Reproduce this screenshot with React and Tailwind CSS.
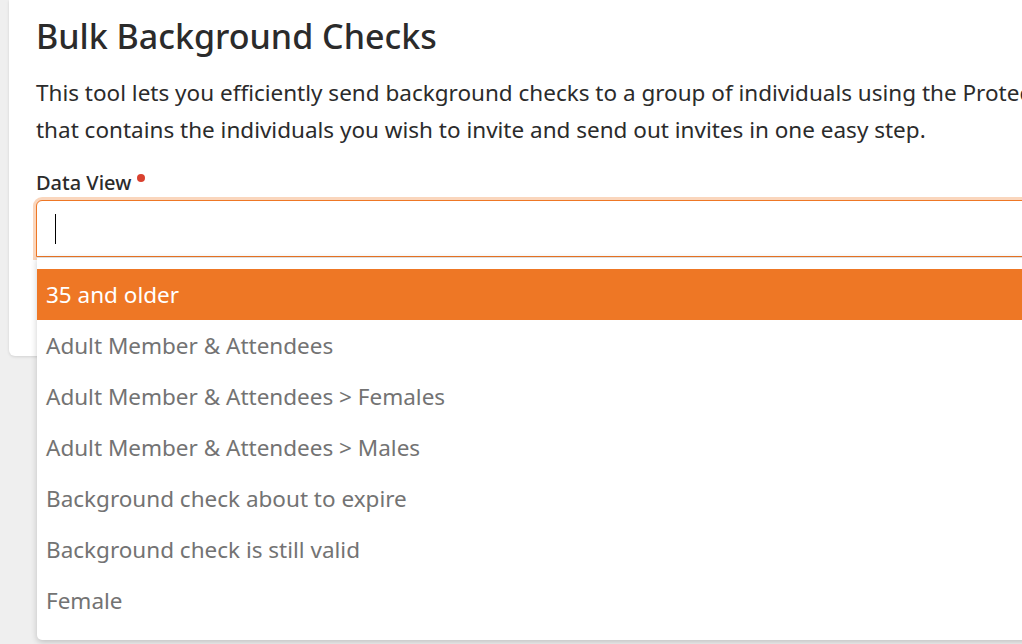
import React from "react";

const items = [
  "Adult Member & Attendees",
  "Adult Member & Attendees > Females",
  "Adult Member & Attendees > Males",
  "Background check about to expire",
  "Background check is still valid",
  "Female",
];

export default function App() {
  return (
    <div
      className="relative h-[644px] w-[1022px] overflow-hidden bg-[#efefef]"
      style={{ fontFamily: '"Noto Sans", "Open Sans", sans-serif' }}
    >
      <div className="ml-[9px] w-[1100px] rounded-bl-[6px] bg-white pl-[27px] pt-[12px] pb-[99px] shadow-[0_1px_3px_rgba(0,0,0,0.12)]">
        <h1 className="text-[34px] leading-[48px] font-medium text-[#2b2b2b]">
          Bulk Background Checks
        </h1>
        <p className="mt-[14px] w-[1200px] text-[22.5px] leading-[37px] text-[#2b2b2b]">
          This tool lets you efficiently send background checks to a group of individuals using the Protect My Ministry
          <br />
          that contains the individuals you wish to invite and send out invites in one easy step.
        </p>
        <div className="mt-[21px] flex items-start text-[20px] leading-[28px] font-medium text-[#2b2b2b]">
          Data View
          <span className="ml-[6px] mt-[5px] h-[8px] w-[8px] rounded-full bg-[#d9412f]" />
        </div>
        <div className="relative mt-[3px]">
          <div className="flex h-[57px] w-[1100px] items-center rounded-tl-[6px] border border-[#ee7725] bg-white pl-[18px] shadow-[0_0_0_3px_rgba(238,119,37,0.3)]">
            <div className="h-[30px] w-[1px] bg-black" />
          </div>
          <div className="absolute left-[1px] top-[57px] z-10 w-[1100px] rounded-bl-[5px] border-t border-[#dedede] bg-white pt-[11px] pb-[14px] shadow-[0_2px_6px_rgba(0,0,0,0.2)]">
            <div className="flex h-[51px] items-center bg-[#ee7725] pl-[9px] text-[22.5px] text-white">
              35 and older
            </div>
            {items.map((t) => (
              <div
                key={t}
                className="flex h-[51px] items-center pl-[9px] text-[22.5px] text-[#737373]"
              >
                {t}
              </div>
            ))}
          </div>
        </div>
      </div>
    </div>
  );
}
